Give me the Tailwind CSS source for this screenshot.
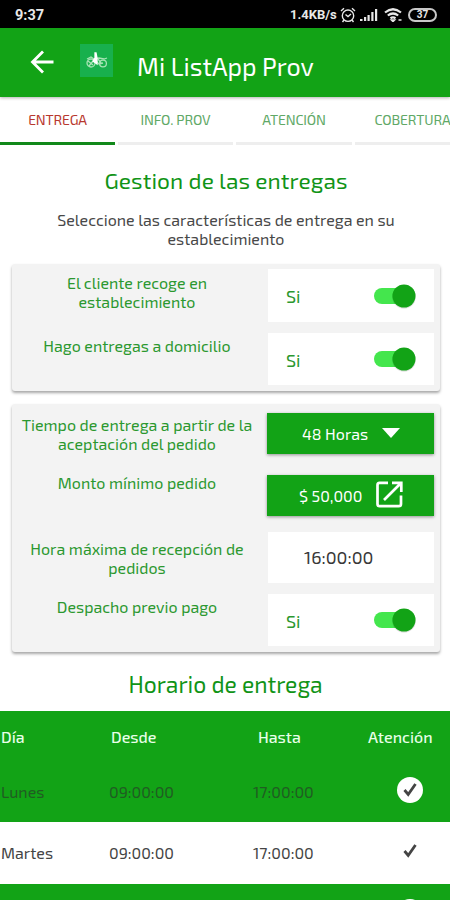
<!DOCTYPE html>
<html lang="es">
<head>
    <meta charset="UTF-8">
    <meta name="viewport" content="width=device-width, initial-scale=1.0">
    <script src="https://cdn.jsdelivr.net/npm/@tailwindcss/browser@4"></script>
    <title>Mi ListApp Prov</title>
</head>
<body class="bg-white font-['Exo_2','Noto_Sans',sans-serif] w-[450px] h-[900px] overflow-hidden">
    <!-- Barra de estado -->
    <div class="h-7 bg-black text-[#e8e8e8] flex items-center justify-between pl-[15px] pr-[13px] font-['Roboto',sans-serif] font-bold">
        <span class="text-[14.5px] pt-1">9:37</span>
        <div class="flex items-center pt-0.5">
            <span class="text-[13px] w-[50px] -ml-px whitespace-nowrap">1.4KB/s</span>
            <svg class="w-4 h-4" viewBox="0 0 16 16" fill="none" stroke="currentColor" stroke-width="1.4">
                <circle cx="8" cy="8.7" r="5.7"/>
                <path d="M1 4l3-2.7M15 4l-3-2.7M5.5 7.5L8 9.5l3-2.5M4 13l-1.5 2M12 13l1.5 2"/>
            </svg>
            <svg class="w-[18px] h-3 ml-1" viewBox="0 0 18 12" fill="currentColor">
                <path d="M0 10h2.5v2H0zM4 8h2.2v4H4zM7.5 6h2.2v6H7.5zM11.3 3h2.2v9h-2.2zM15 0h2.2v12H15z"/>
            </svg>
            <svg class="w-[18px] h-[14px] ml-1.5" viewBox="0 0 18 14" fill="none" stroke="currentColor" stroke-width="2.2">
                <path d="M1 4.5q8-6.5 16 0M3.8 7.5q5.2-4 10.4 0M6.5 10.3q2.5-2 5 0"/>
                <path d="M7.5 12h3L9 13.5zM14.5 12h3" stroke-width="1.6"/>
            </svg>
            <div class="w-[29px] h-[14px] ml-1.5 rounded-full border-2 border-[#c8c8c8] flex items-center justify-center text-[10px] leading-none">37</div>
        </div>
    </div>

    <!-- Cabecera -->
    <header class="h-[69px] bg-[#12a316] text-white flex items-start shadow-[0_1px_3px_rgba(0,0,0,0.3)]">
        <svg class="w-6 h-6 ml-[30px] mt-[22px]" viewBox="0 0 24 24" fill="none" stroke="currentColor" stroke-width="2.8">
            <path d="M23.5 12H2.5M13 1.5L2.5 12 13 22.5"/>
        </svg>
        <div class="w-[33px] h-[33px] ml-[26px] mt-[16px] bg-[#18b04d] flex items-center justify-center">
            <svg class="w-[22px] h-[18px]" viewBox="0 0 22 18" fill="none" stroke="#a5e3b4" stroke-width="1.3">
                <circle cx="5" cy="11" r="4"/>
                <circle cx="17" cy="11.5" r="3.4"/>
                <path d="M1 7l4-2 3 2 5-1 5 1 3-1M5 11l4-3 4 4 4-1M12 7l3 4M2 9l5 4M7 9l-4 5"/>
                <path d="M9 1v5l-2 3 4 3V6l-1-5z" fill="#fff" stroke="#fff"/>
            </svg>
        </div>
        <h1 class="ml-6 mt-[22px] text-[25px] leading-8 whitespace-nowrap">Mi ListApp Prov</h1>
    </header>

    <!-- Pestañas -->
    <nav class="h-12 flex gap-[3px] text-sm leading-[46px] text-center text-[#60a866] whitespace-nowrap overflow-hidden">
        <div class="w-[115px] shrink-0 border-b-[3px] border-[#12891a] text-[#b8382e] tracking-[-0.15px]">ENTREGA</div>
        <div class="w-[115px] shrink-0 border-b-[3px] border-[#eeeeee] tracking-[-0.15px]">INFO. PROV</div>
        <div class="w-[116px] shrink-0 border-b-[3px] border-[#eeeeee] tracking-[-0.15px]">ATENCIÓN</div>
        <div class="w-[115px] shrink-0 border-b-[3px] border-[#eeeeee] tracking-[-0.1px]">COBERTURA</div>
    </nav>

    <main>
        <h2 class="mt-[19px] pl-0.5 text-center text-[22.7px] leading-8 text-[#119417] tracking-[0.1px]">Gestion de las entregas</h2>
        <p class="mt-[14px] pl-0.5 text-center text-base leading-[19px] text-[#484848]">Seleccione las características de entrega en su<br>establecimiento</p>

        <section class="mt-4 ml-3 w-[428px] h-[127px] bg-[#f3f3f3] rounded-[3px] shadow-[0_2px_3px_rgba(0,0,0,0.35)] pt-[5px] text-base leading-[19px] text-[#2b982f]">
            <div class="flex h-16">
                <div class="w-[250px] mr-[6px] pt-1 text-center">El cliente recoge en<br>establecimiento</div>
                <div class="w-[166px] h-[53px] bg-white flex items-center pl-[18px]">
                    <span class="text-[18px] pt-0.5">Si</span>
                    <svg class="w-[46px] h-[30px] ml-auto mr-[17px]" viewBox="0 0 46 30">
                        <rect x="3" y="7" width="32" height="16" rx="8" fill="#44e64d"/>
                        <circle cx="33" cy="16" r="11.8" fill="#000" opacity=".12"/>
                        <circle cx="33" cy="15" r="11.5" fill="#12a316"/>
                    </svg>
                </div>
            </div>
            <div class="flex">
                <div class="w-[250px] mr-[6px] pt-[3px] text-center">Hago entregas a domicilio</div>
                <div class="w-[166px] h-[52px] bg-white flex items-center pl-[18px]">
                    <span class="text-[18px] pt-0.5">Si</span>
                    <svg class="w-[46px] h-[30px] ml-auto mr-[17px]" viewBox="0 0 46 30">
                        <rect x="3" y="7" width="32" height="16" rx="8" fill="#44e64d"/>
                        <circle cx="33" cy="16" r="11.8" fill="#000" opacity=".12"/>
                        <circle cx="33" cy="15" r="11.5" fill="#12a316"/>
                    </svg>
                </div>
            </div>
        </section>

        <section class="mt-[13px] ml-3 w-[428px] h-[248px] bg-[#f3f3f3] rounded-[3px] shadow-[0_2px_3px_rgba(0,0,0,0.35)] pt-[9px] text-base leading-[19px] text-[#2b982f]">
            <div class="flex h-[62px]">
                <div class="w-[250px] mr-[5px] pt-0.5 text-center whitespace-nowrap">Tiempo de entrega a partir de la<br>aceptación del pedido</div>
                <div class="w-[167px] h-[41px] bg-[#12a316] text-white shadow-[0_1px_3px_rgba(0,0,0,0.4)] flex items-center pl-[35px]">
                    <span class="w-20 whitespace-nowrap">48 Horas</span>
                    <svg class="w-[18px] h-[10px] -mt-0.5" viewBox="0 0 18 10" fill="#fff"><path d="M0 0h18L9 10z"/></svg>
                </div>
            </div>
            <div class="flex h-[57px]">
                <div class="w-[250px] mr-[5px] -mt-0.5 text-center">Monto mínimo pedido</div>
                <div class="w-[167px] h-[41px] bg-[#12a316] text-white shadow-[0_1px_3px_rgba(0,0,0,0.4)] flex items-center pl-8">
                    <span class="w-[77px] whitespace-nowrap">$ 50,000</span>
                    <svg class="w-[27px] h-[27px] -mt-0.5" viewBox="0 0 27 27" fill="none" stroke="#fff" stroke-width="2.7">
                        <path d="M12 1.8H3.5Q1.5 1.8 1.5 4v19q0 2.2 2.2 2.2h19q2.3 0 2.3-2.2V14.5M16 1.8h9.3V11M25 2L8 19"/>
                    </svg>
                </div>
            </div>
            <div class="flex h-[62px]">
                <div class="w-[250px] mr-[6px] pt-[7px] text-center">Hora máxima de recepción de<br>pedidos</div>
                <div class="w-[166px] h-[51px] bg-white text-[#383838] text-[18px] flex items-center pl-9">16:00:00</div>
            </div>
            <div class="flex">
                <div class="w-[250px] mr-[6px] pt-[3px] text-center">Despacho previo pago</div>
                <div class="w-[166px] h-[52px] bg-white flex items-center pl-[18px]">
                    <span class="text-[18px] pt-0.5">Si</span>
                    <svg class="w-[46px] h-[30px] ml-auto mr-[17px]" viewBox="0 0 46 30">
                        <rect x="3" y="7" width="32" height="16" rx="8" fill="#44e64d"/>
                        <circle cx="33" cy="16" r="11.8" fill="#000" opacity=".12"/>
                        <circle cx="33" cy="15" r="11.5" fill="#12a316"/>
                    </svg>
                </div>
            </div>
        </section>

        <h2 class="mt-4 pl-px text-center text-[22.9px] leading-8 text-[#119417]">Horario de entrega</h2>

        <!-- Tabla de horarios -->
        <div class="mt-[11px] text-base text-[#444]">
            <div class="grid grid-cols-[110px_147px_110px_82px] items-center h-[51px] pl-px bg-[#12a316] text-[#e8ffe9] font-medium">
                <span>Día</span><span>Desde</span><span>Hasta</span><span>Atención</span>
            </div>
            <div class="grid grid-cols-[108px_144px_144px_53px] items-center h-[60px] pl-px bg-[#12a316] text-[#205c22]">
                <span>Lunes</span><span>09:00:00</span><span>17:00:00</span>
                <svg class="w-7 h-7 -ml-px -mt-1" viewBox="0 0 28 28">
                    <circle cx="14" cy="14" r="13" fill="#fff"/>
                    <path d="M8.5 14l3.7 4.5L19.5 8" fill="none" stroke="#444" stroke-width="2.8"/>
                </svg>
            </div>
            <div class="grid grid-cols-[108px_144px_144px_53px] items-center h-[62px] pl-px">
                <span>Martes</span><span>09:00:00</span><span>17:00:00</span>
                <svg class="w-7 h-7 -ml-px -mt-1" viewBox="0 0 28 28">
                    <path d="M8.5 14l3.7 4.5L19.5 8" fill="none" stroke="#444" stroke-width="2.8"/>
                </svg>
            </div>
            <div class="h-4 bg-[#12a316] pt-[14px] pl-[396px] overflow-hidden">
                <svg class="w-7 h-7" viewBox="0 0 28 28">
                    <circle cx="14" cy="14" r="13" fill="#fff"/>
                </svg>
            </div>
        </div>
    </main>
</body>
</html>
